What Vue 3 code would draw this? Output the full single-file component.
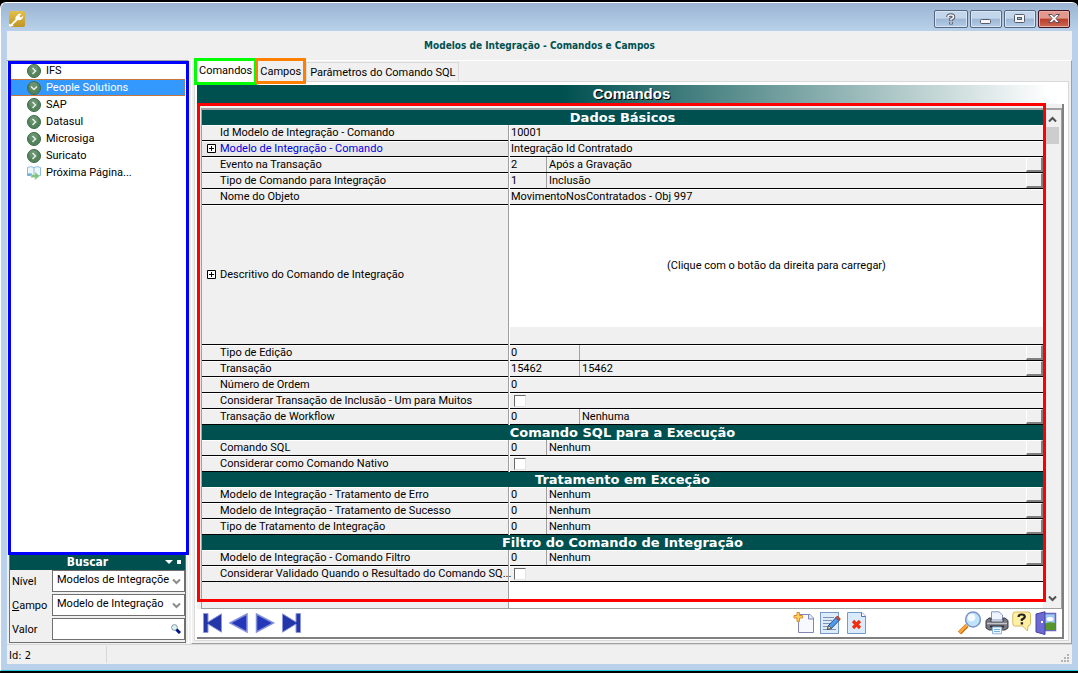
<script setup>
import { ref } from 'vue'

const tree = ['IFS', 'People Solutions', 'SAP', 'Datasul', 'Microsiga', 'Suricato']
const selected = ref('People Solutions')

const rows = [
  { section: 'Dados Básicos' },
  { label: 'Id Modelo de Integração - Comando', value: '10001' },
  { label: 'Modelo de Integração - Comando', value: 'Integração Id Contratado', expand: true, link: true },
  { label: 'Evento na Transação', value: '2', text: 'Após a Gravação', lookup: true },
  { label: 'Tipo de Comando para Integração', value: '1', text: 'Inclusão', lookup: true },
  { label: 'Nome do Objeto', value: 'MovimentoNosContratados - Obj 997' },
  { label: 'Descritivo do Comando de Integração', memo: '(Clique com o botão da direita para carregar)', expand: true },
  { label: 'Tipo de Edição', value: '0', text: '', wide: true, lookup: true },
  { label: 'Transação', value: '15462', text: '15462', wide: true, lookup: true },
  { label: 'Número de Ordem', value: '0' },
  { label: 'Considerar Transação de Inclusão - Um para Muitos', check: true },
  { label: 'Transação de Workflow', value: '0', text: 'Nenhuma', wide: true, lookup: true },
  { section: 'Comando SQL para a Execução' },
  { label: 'Comando SQL', value: '0', text: 'Nenhum', lookup: true },
  { label: 'Considerar como Comando Nativo', check: true },
  { section: 'Tratamento em Exceção' },
  { label: 'Modelo de Integração - Tratamento de Erro', value: '0', text: 'Nenhum', lookup: true },
  { label: 'Modelo de Integração - Tratamento de Sucesso', value: '0', text: 'Nenhum', lookup: true },
  { label: 'Tipo de Tratamento de Integração', value: '0', text: 'Nenhum', lookup: true },
  { section: 'Filtro do Comando de Integração' },
  { label: 'Modelo de Integração - Comando Filtro', value: '0', text: 'Nenhum', lookup: true },
  { label: 'Considerar Validado Quando o Resultado do Comando SQ...', check: true },
]
</script>

<template>
  <div class="window">
    <header class="titlebar">
      <svg class="app-icon" width="16" height="16" viewBox="0 0 16 16">
        <defs>
          <linearGradient id="gold" x1="0" y1="0" x2="0" y2="1">
            <stop offset="0" stop-color="#e3c04a" /><stop offset="1" stop-color="#bf9424" />
          </linearGradient>
        </defs>
        <rect width="16" height="16" rx="2" fill="url(#gold)" />
        <path d="M0 12.500 L1.500 13.500 L6.500 8.500 L6.500 6 L9.500 3 L12.500 2.600 L10.500 5 L11 6.200 L12.500 6.200 L14.500 4.500 L13.500 7.500 L11 9.200 L8.800 9 L4 13.500 L4.500 15.500 L3 15 L1.500 16 L0 15 Z" fill="#fff" />
      </svg>
      <div class="caption-buttons">
        <button class="cap help" aria-label="Ajuda">
          <svg width="12" height="12" viewBox="0 0 12 12">
            <path d="M3 4 Q3 2 6 2 Q8.500 2 8.500 4 Q8.500 5.300 6 6.200 V8 M6 9 V11.500" fill="none" stroke="#565b6b" stroke-width="3.600" />
            <path d="M3 4 Q3 2 6 2 Q8.500 2 8.500 4 Q8.500 5.300 6 6.200 V7.600 M6 9.200 V10.800" fill="none" stroke="#f4f4f4" stroke-width="1.600" />
          </svg>
        </button>
        <button class="cap" aria-label="Minimizar">
          <svg width="12" height="12" viewBox="0 0 12 12"><rect x=".5" y="6.500" width="10" height="4" rx="1" fill="#f6f6f6" stroke="#565b6b" /></svg>
        </button>
        <button class="cap" aria-label="Maximizar">
          <svg width="12" height="12" viewBox="0 0 12 12">
            <rect x=".5" y="1.500" width="10" height="8" rx="1" fill="#f6f6f6" stroke="#565b6b" />
            <rect x="3.500" y="4.500" width="4" height="2" fill="#9db8d6" stroke="#565b6b" />
          </svg>
        </button>
        <button class="cap close" aria-label="Fechar">
          <svg width="12" height="12" viewBox="0 0 12 12">
            <path d="M.5 1.500 H4 L6 3.700 L8 1.500 H11.500 L8 5.500 L11.500 9.500 H8 L6 7.300 L4 9.500 H.5 L4 5.500 Z" fill="#f6f6f6" stroke="#59505f" />
          </svg>
        </button>
      </div>
    </header>

    <div class="client">
      <h1 class="page-title">Modelos de Integração - Comandos e Campos</h1>

      <div class="body">
        <aside class="side">
          <nav class="tree">
            <button
              v-for="item in tree"
              :key="item"
              class="node"
              :class="{ active: item === selected }"
              @click="selected = item"
            >
              <svg width="14" height="14" viewBox="0 0 14 14">
                <circle cx="7" cy="7" r="6.500" fill="#55835d" stroke="#3c6b49" />
                <circle cx="6.500" cy="5" r="4" fill="#7d9f80" opacity=".55" />
                <path :d="item === selected ? 'M4 5.5 L7 8.5 L10 5.5' : 'M5.5 4 L8.5 7 L5.5 10'" fill="none" stroke="#e6f0e6" stroke-width="1.500" />
              </svg>
              <span>{{ item }}</span>
            </button>
            <button class="node">
              <svg width="14" height="14" viewBox="0 0 14 14">
                <path d="M.5 1.500 Q3.500 -.3 7 1.500 Q10.500 -.3 13.500 1.500 V9.500 H.5 Z" fill="#edf6fb" stroke="#8dbddd" />
                <path d="M7 1.500 V9.500" stroke="#8dbddd" />
                <path d="M.5 8.500 H5" stroke="#62a7d6" stroke-width="2" />
                <path d="M4 8.700 H8 V6 L12.600 10 L8 14 V11.400 H4 Z" fill="#7cc47e" stroke="#c8e6c8" stroke-width=".6" />
              </svg>
              <span>Próxima Página...</span>
            </button>
          </nav>

          <section class="search">
            <div class="search-head">
              <h2>Buscar</h2>
              <svg width="16" height="6" viewBox="0 0 16 6"><path d="M0 1 H8 L4 5 Z M12 1 H16 V5 H12 Z" fill="#fff" /></svg>
            </div>
            <div class="field">
              <label for="nivel">Nível</label>
              <div class="box">
                <select id="nivel"><option>Modelos de Integraçõe</option></select>
                <svg class="chev" width="9" height="7" viewBox="0 0 9 7"><path d="M1 1.500 L4.500 5 L8 1.500" fill="none" stroke="#8c8c8c" stroke-width="2" /></svg>
              </div>
            </div>
            <div class="field">
              <label for="campo"><u>C</u>ampo</label>
              <div class="box">
                <select id="campo"><option>Modelo de Integração</option></select>
                <svg class="chev" width="9" height="7" viewBox="0 0 9 7"><path d="M1 1.500 L4.500 5 L8 1.500" fill="none" stroke="#8c8c8c" stroke-width="2" /></svg>
              </div>
            </div>
            <div class="field">
              <label for="valor">Valor</label>
              <div class="box">
                <input id="valor" type="text" />
                <button class="find" aria-label="Localizar">
                  <svg width="10" height="10" viewBox="0 0 10 10">
                    <circle cx="3.500" cy="3.500" r="2.900" fill="#d9f1f5" stroke="#8a9aa0" />
                    <path d="M5.500 5.500 L9 9" stroke="#00108a" stroke-width="3" />
                  </svg>
                </button>
              </div>
            </div>
          </section>
          <div class="mark mark-blue"></div>
        </aside>

        <main class="main">
          <div class="tabs" role="tablist">
            <button class="tab current" role="tab" aria-selected="true">Comandos</button>
            <button class="tab second" role="tab">Campos</button>
            <button class="tab" role="tab">Parâmetros do Comando SQL</button>
          </div>

          <div class="page">
            <h2 class="band">Comandos</h2>

            <div class="frame">
              <div class="sheet">
                <div class="sheet-body">
                  <table>
                    <colgroup><col class="c-label" /><col /></colgroup>
                    <tbody>
                      <template v-for="(r, i) in rows" :key="i">
                        <tr v-if="r.section" class="section">
                          <th colspan="2" scope="colgroup">{{ r.section }}</th>
                        </tr>
                        <tr v-else>
                          <th scope="row">
                            <div class="cell name" :class="{ tall: r.memo, link: r.link }">
                              <button v-if="r.expand" class="plus" :aria-label="'Expandir ' + r.label">
                                <svg width="9" height="9" viewBox="0 0 9 9"><path d="M.5 .5 H8.500 V8.500 H.5 Z M2 4.500 H7 M4.500 2 V7" fill="#fff" stroke="#000" /></svg>
                              </button>
                              <label v-if="r.check" :for="'f' + i">{{ r.label }}</label>
                              <span v-else>{{ r.label }}</span>
                            </div>
                          </th>
                          <td>
                            <div v-if="r.memo" class="cell tall memo"><div>{{ r.memo }}</div></div>
                            <div v-else-if="r.check" class="cell"><input :id="'f' + i" type="checkbox" /></div>
                            <div v-else class="cell">
                              <span class="code" :class="{ split: r.text !== undefined, wide: r.wide }">{{ r.value }}</span>
                              <span v-if="r.text !== undefined" class="desc">{{ r.text }}</span>
                              <button v-if="r.lookup" class="lookup" :aria-label="'Procurar ' + r.label"></button>
                            </div>
                          </td>
                        </tr>
                      </template>
                    </tbody>
                  </table>
                  <div class="rest"><div></div><div></div></div>
                </div>
                <div class="scroll">
                  <svg width="9" height="7" viewBox="0 0 9 7"><path d="M1 5.500 L4.500 2 L8 5.500" fill="none" stroke="#505050" stroke-width="2" /></svg>
                  <div class="thumb"></div>
                  <svg width="9" height="7" viewBox="0 0 9 7"><path d="M1 1.500 L4.500 5 L8 1.500" fill="none" stroke="#505050" stroke-width="2" /></svg>
                </div>
              </div>

              <div class="toolbar">
                <div class="group nav">
                  <button aria-label="Primeiro"><svg width="20" height="20" viewBox="0 0 20 20"><path d="M.5 .5 H5 V9 L18.500 .8 V19.200 L5 11 V19.500 H.5 Z" fill="#2437a8" stroke="#8d98dc" /></svg></button>
                  <button aria-label="Anterior"><svg width="20" height="20" viewBox="0 0 20 20"><path d="M1 10 L18 1 V19 Z" fill="#2437b8" stroke="#8390dc" stroke-width="1.500" /></svg></button>
                  <button aria-label="Próximo"><svg width="20" height="20" viewBox="0 0 20 20"><path d="M18.500 10 L1.500 1 V19 Z" fill="#2437b8" stroke="#8390dc" stroke-width="1.500" /></svg></button>
                  <button aria-label="Último"><svg width="20" height="20" viewBox="0 0 20 20"><path d="M19.500 .5 H15 V9 L1.500 .8 V19.200 L15 11 V19.500 H19.500 Z" fill="#2437a8" stroke="#8d98dc" /></svg></button>
                </div>
                <div class="group edit">
                  <button aria-label="Novo"><svg width="21" height="24" viewBox="0 0 21 24">
                    <path d="M5.500 3.500 H17 L20.500 7 V21.500 H5.500 Z" fill="#f7f9ff" stroke="#7f86b5" />
                    <path d="M15.500 3.500 V8 H20" fill="#dfe6f5" stroke="#7f86b5" />
                    <path d="M4 1.500 H6.500 V4.500 H9.500 V7 H6.500 V10.500 H4 V7 H1 V4.500 H4 Z" fill="#ffd25c" stroke="#e08a2c" />
                  </svg></button>
                  <button aria-label="Editar"><svg width="21" height="24" viewBox="0 0 21 24">
                    <rect x=".5" y="1.500" width="18" height="21" fill="#dcecfb" stroke="#7799c8" />
                    <path d="M3 6.500 H14 M3 9.500 H12 M3 12.500 H11 M3 15.500 H8 M3 18.500 H16" stroke="#7d92b5" />
                    <path d="M7.500 18.500 L8.500 14.500 L16 6.500 L19 9.500 L11.500 17.300 Z" fill="#4f9be8" stroke="#1c4c94" />
                    <path d="M16 6.500 L17.500 5 L20.300 8 L19 9.500 Z" fill="#d8583a" stroke="#9c2f20" />
                    <path d="M7.500 18.500 L8.500 14.500 L11.500 17.300 Z" fill="#f6e3b6" stroke="#333" stroke-width=".7" />
                  </svg></button>
                  <button aria-label="Excluir"><svg width="21" height="24" viewBox="0 0 21 24">
                    <path d="M.5 1.500 H15 L18.500 5 V22.500 H.5 Z" fill="#d9ebfd" stroke="#7799c8" />
                    <path d="M14.500 1.500 V5.500 H18.500" fill="#fff" stroke="#4a76c0" />
                    <path d="M6 10 L13 17 M13 10 L6 17" stroke="#f0300f" stroke-width="3.200" />
                  </svg></button>
                </div>
                <div class="group tools">
                  <button aria-label="Pesquisar"><svg width="25" height="24" viewBox="0 0 25 24">
                    <path d="M10 14.500 L2.500 22" stroke="#c36a10" stroke-width="4.500" />
                    <path d="M10 14 L2.500 21.500" stroke="#ffa83a" stroke-width="2.500" />
                    <circle cx="16" cy="8.500" r="7.400" fill="#bfe3fa" stroke="#7d93c8" stroke-width="1.500" />
                    <circle cx="14.500" cy="6.500" r="3.800" fill="#f3fcff" />
                  </svg></button>
                  <button aria-label="Imprimir"><svg width="24" height="24" viewBox="0 0 24 24">
                    <path d="M6.500 9 V.8 H14 L17.500 4 V9 Z" fill="#eef5ff" stroke="#8894c0" />
                    <path d="M1 9.500 L4 7 H6 V11 H18 V7 H20 L23 9.500 V17 L20 19 H4 L1 17 Z" fill="#77777f" stroke="#3c3c48" />
                    <path d="M2 12.500 H22" stroke="#c4c4cc" stroke-width="1.500" />
                    <rect x="5" y="14.500" width="14" height="2" fill="#2c2c38" />
                    <path d="M7.500 16 H16.500 V22.800 H7.500 Z" fill="#eaf5ff" stroke="#8fb5da" />
                    <path d="M9 18.500 H15 M9 20.500 H15" stroke="#74b4e2" />
                  </svg></button>
                  <button aria-label="Ajuda"><svg width="20" height="24" viewBox="0 0 20 24">
                    <path d="M3 1 H16 Q18.500 1 18.500 3.500 V12.500 Q18.500 15 16 15 L15.500 20 L10.500 15 H3 Q.8 15 .8 12.500 V3.500 Q.8 1 3 1 Z" fill="#fff0a4" stroke="#d8b860" />
                    <path d="M6.500 6 Q6.500 3.500 9.700 3.500 Q12.800 3.500 12.800 5.800 Q12.800 7.300 9.800 8.600 V10" fill="none" stroke="#222" stroke-width="2.200" />
                    <rect x="8.700" y="11.200" width="2.400" height="2.300" fill="#222" />
                  </svg></button>
                  <button aria-label="Sair"><svg width="22" height="24" viewBox="0 0 22 24">
                    <rect x="8.500" y="2.500" width="12" height="17" fill="#9fc9f4" stroke="#6a66c0" stroke-width="1.500" />
                    <ellipse cx="15" cy="8" rx="3.500" ry="2" fill="#fff" />
                    <path d="M9 13 Q14 10 20 12 V19 H9 Z" fill="#58962c" />
                    <path d="M1 3 L10 .8 V23.500 L1 21 Z" fill="#6c68d4" stroke="#4440a0" />
                    <path d="M6 11 H8" stroke="#fff" stroke-width="2" />
                  </svg></button>
                </div>
              </div>
              <div class="mark mark-red"></div>
            </div>
          </div>
        </main>
      </div>

      <footer class="status">
        <span>Id: 2</span>
        <svg width="9" height="9" viewBox="0 0 9 9"><path d="M6 0 H8 V2 H6 Z M3 3 H5 V5 H3 Z M6 3 H8 V5 H6 Z M0 6 H2 V8 H0 Z M3 6 H5 V8 H3 Z M6 6 H8 V8 H6 Z" fill="#b4b4b4" /></svg>
      </footer>
    </div>
  </div>
</template>

<style>
body { background: #000; }
</style>

<style scoped>
* { box-sizing: border-box; }
h1, h2 { margin: 0; }
button, input, select { font: inherit; color: inherit; margin: 0; padding: 0; border: 0; background: none; border-radius: 0; }
svg { display: block; flex: none; }

.window {
  display: flex;
  flex-direction: column;
  min-height: calc(100vh - 4px);
  margin-top: 2px;
  padding: 0 6px 6px;
  border-top: 1px solid #fff;
  border-left: 1px solid #fff;
  border-bottom: 1px solid #24c8d8;
  border-radius: 6px 6px 0 0;
  background: linear-gradient(#9ab4d2, #b9d1ea 28px);
  font: 11px/14px Roboto, "Liberation Sans", sans-serif;
  color: #000;
}
.titlebar { display: flex; justify-content: space-between; height: 28px; padding: 7px 2px 0; }
.app-icon { margin-top: 1px; }
.caption-buttons { display: flex; gap: 2px; }
.cap {
  display: flex; align-items: center; justify-content: center;
  width: 32px; height: 18px;
  border: 1px solid #56677f; border-radius: 2px;
  background: linear-gradient(#c3d6ec 45%, #9db7d5 50%, #b4cce6);
  box-shadow: inset 0 0 0 1px #d7e5f5;
}
.cap.help { width: 34px; }
.cap.close { border-color: #431422; background: linear-gradient(#e2988c 45%, #bb3b2a 50%, #cb6a52); box-shadow: inset 0 0 0 1px #eab0a6; }

.client { flex: 1; display: flex; flex-direction: column; background: #f0f0f0; }
.page-title {
  height: 29px; text-align: center; color: #005050;
  font: bold 10px/30px "DejaVu Sans Condensed", "DejaVu Sans", sans-serif;
}
.body { flex: 1; display: flex; gap: 2px; }

.side { position: relative; width: 182px; flex: none; display: flex; flex-direction: column; padding: 3px 2px 1px; border-top: 1px solid #a0a0a0; border-right: 1px solid #fff; }
.tree { flex: 1; display: flex; flex-direction: column; background: #fff; margin: -2px -1px 0; padding: 0 2px; }
.node { display: flex; align-items: center; gap: 5px; height: 17px; padding-left: 17px; text-align: left; }
.node span { padding-top: 1px; }
.node.active { background: #3399ff; color: #fff; outline: 1px dotted #c8783c; outline-offset: -1px; }
.search { border: 1px solid #707070; border-top: 0; padding-bottom: 2px; display: flex; flex-direction: column; gap: 2px; background: #f0f0f0; }
.search-head { display: flex; align-items: center; height: 16px; margin-bottom: -2px; padding-right: 4px; background: #005050; color: #fff; }
.search-head h2 { flex: 1; text-align: center; font: bold 12px/14px "DejaVu Sans Condensed", "DejaVu Sans", sans-serif; }
.field { display: flex; align-items: center; height: 22px; padding-left: 2px; }
.field label { width: 40px; flex: none; padding-top: 1px; }
.box { position: relative; flex: 1; height: 22px; display: flex; align-items: center; border: 1px solid #707070; background: #fff; }
.box select, .box input { appearance: none; width: 100%; height: 20px; padding: 0 14px 2px 4px; outline: 0; }
.chev { position: absolute; right: 3px; pointer-events: none; }
.find { position: absolute; right: 3px; }

.mark { position: absolute; pointer-events: none; border: 3px solid; }
.mark-blue { inset: 0 -1px 89px 1px; border-color: #0000ff; }
.mark-red { inset: -1px 16px 35px 0; border-color: #ff0000; }

.main { flex: 1; min-width: 0; display: flex; flex-direction: column; border-top: 1px solid #fff; border-left: 1px solid #fff; border-right: 1px solid #a0a0a0; border-bottom: 1px solid #a0a0a0; padding: 0 2px 2px; }
.tabs { display: flex; align-items: flex-end; height: 20px; }
.tab { height: 19px; padding: 2px 2px 0 3px; border: 1px solid #d9d9d9; border-bottom: 0; white-space: nowrap; }
.tab.current { position: relative; height: 27px; margin: 0 0 -4px; padding: 0 2px 2px; border: 3px solid #00ff00; background: #fff; }
.tab.second { position: relative; height: 26px; margin: 0 0 -3px -2px; padding: 2px 2px 0; border: 3px solid #ff8000; background: #f0f0f0; }
.page { flex: 1; display: flex; flex-direction: column; padding: 3px 2px 1px; border: 1px solid #d9d9d9; background: #fff; }
.band {
  height: 19px; text-align: center; color: #fff; text-shadow: 1px 1px 0 #000;
  font: bold 15px/18px "Liberation Sans", Arial, sans-serif;
  background: linear-gradient(90deg, #005050 42%, #fff 98%);
}
.frame { position: relative; flex: 1; display: flex; flex-direction: column; margin-right: 2px; border-right: 2px solid #808080; border-bottom: 2px solid #808080; background: #f0f0f0; padding-top: 4px; }
.sheet { flex: 1; display: flex; margin-left: 4px; border: 1px solid #a0a0a0; border-top-width: 2px; }
.sheet-body { flex: 1; display: flex; flex-direction: column; }
table { width: 100%; border-spacing: 0; table-layout: fixed; }
.c-label { width: 307px; }
th, td { padding: 0; font-weight: normal; text-align: left; }
th { border-right: 1px solid #a0a0a0; }
td { padding-left: 1px; background: #fff; }
.section th { height: 15px; border: 0; background: #005050; color: #fff; text-align: center; font: bold 13px/15px "DejaVu Sans", Verdana, sans-serif; }
.cell { display: flex; align-items: center; height: 16px; border-bottom: 1px solid #000; background: #f0f0f0; box-shadow: inset 0 1px #fff; white-space: nowrap; }
.cell span, .cell label { padding-top: 1px; }
.name { position: relative; padding-left: 18px; }
.name.link { color: #0000e0; background: #e9e9e9; }
.plus { position: absolute; left: 5px; }
.tall { height: 140px; }
.memo { align-items: stretch; padding-bottom: 17px; }
.memo div { flex: 1; display: flex; align-items: center; justify-content: center; background: #fff; }
.code { padding-left: 1px; align-self: stretch; }
.code.split { width: 37px; border-right: 1px solid #a0a0a0; }
.code.wide { width: 70px; }
.desc { flex: 1; padding-left: 2px; }
.lookup { width: 17px; height: 15px; border: 1px solid #fff; border-right: 2px solid #808080; border-bottom: 2px solid #808080; background: #f0f0f0; }
.cell input { appearance: none; width: 12px; height: 12px; margin-left: 4px; background: #fff; border: 1px solid #e3e3e3; border-top-color: #696969; border-left-color: #696969; }
.rest { flex: 1; display: grid; grid-template-columns: 307px 1fr; min-height: 24px; }
.rest div:first-child { border-right: 1px solid #a0a0a0; }
.rest div:last-child { background: #fff; }
.scroll { width: 18px; display: flex; flex-direction: column; align-items: center; padding: 6px 0 6px 0; }
.thumb { width: 14px; height: 17px; margin: 4px 0 auto; background: #cdcdcd; }

.toolbar { display: flex; align-items: center; height: 28px; padding-left: 6px; background: #fff; }
.group { display: flex; align-items: center; }
.nav { gap: 6px; }
.edit { margin-left: auto; gap: 6px; }
.tools { margin-left: 89px; gap: 3px; padding-right: 5px; }

.status { display: flex; align-items: center; justify-content: space-between; height: 20px; border-top: 1px solid #d7d7d7; padding: 1px 2px; }
.status span { width: 98px; height: 17px; border-right: 1px solid #d7d7d7; font: 11px/20px "DejaVu Sans Condensed", "DejaVu Sans", sans-serif; }
.status svg { align-self: flex-end; }
</style>
